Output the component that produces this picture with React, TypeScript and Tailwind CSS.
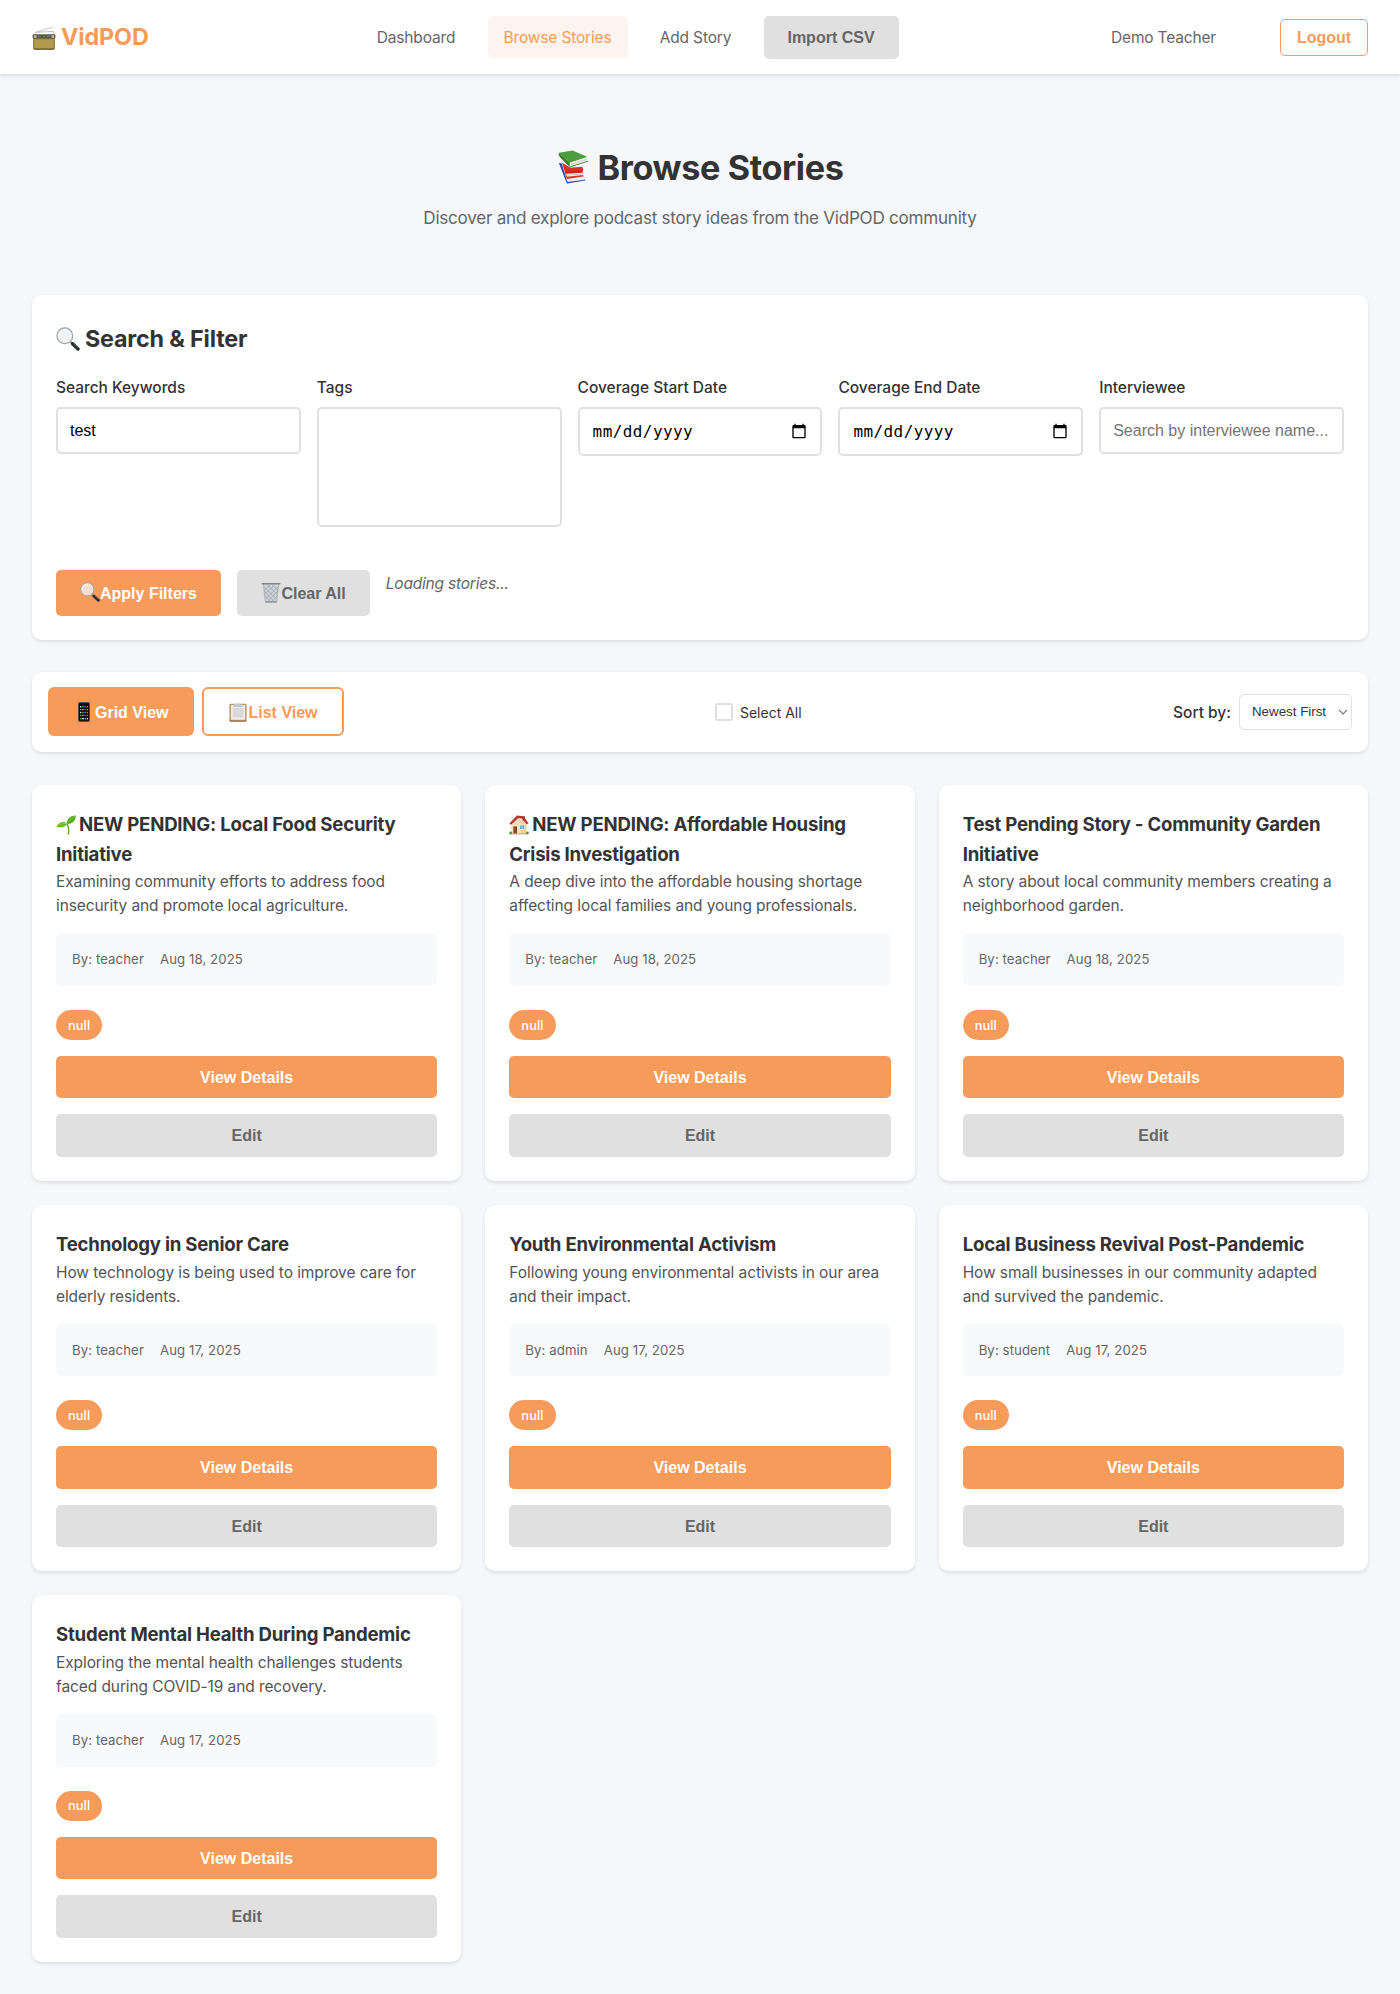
import type { ReactNode } from "react";

type IconProps = { className?: string };

function RadioIcon({ className }: IconProps) {
  return (
    <svg viewBox="0 0 24 24" className={className} fill="none">
      <path d="M3 6.4 21 1.2" stroke="#b9b6ae" strokeWidth="0.7" />
      <path d="M2.4 9 5 6.2l16.5-.7L22.4 9" stroke="#b3ad94" strokeWidth="0.8" />
      <rect x="0.6" y="8.2" width="22.8" height="4.6" rx="1" fill="#59595a" />
      <rect x="1.2" y="12" width="21.6" height="11.4" rx="1" fill="#7c6c33" />
      <rect x="2.2" y="13.2" width="19.6" height="9.2" fill="#b09b4e" />
      <rect x="5" y="9" width="14" height="2.8" fill="#4a5361" />
      <path d="M6 10.3h3M11 10.3h2M15 10.3h3" stroke="#8d97a5" strokeWidth="0.8" />
      <circle cx="3.2" cy="10.6" r="1.5" fill="#c6b577" />
      <circle cx="20.8" cy="10.6" r="1.5" fill="#c6b577" />
      <path d="M2.4 23.3h19.2" stroke="#4d4424" strokeWidth="0.8" />
    </svg>
  );
}

function BooksIcon({ className }: IconProps) {
  return (
    <svg viewBox="0 0 32 36" className={className}>
      <path d="m1 13.4 3 1 5.8 18.7 19-2.6.2 1.8L9.8 35.6 8.8 34z" fill="#2c4aa0" />
      <path d="m9.8 32 18.6-2.8.2 2.2-18.2 2.6z" fill="#e7e9ef" />
      <path d="m4.4 13.6 9 5.2 12.4-1 1.2 3.6-1 1 1 5.6L9.4 30.6z" fill="#dc2f22" />
      <path d="m8.6 25.2 18-1 .4 2.2-17.4 2z" fill="#f1ece8" />
      <path d="m8.2 23.6 17.6-1" stroke="#9c1d16" strokeWidth="0.8" />
      <path d="m9.2 26.6 17.6-1.4" stroke="#b9afab" strokeWidth="0.6" />
      <path d="M1 2.8 15.6.4l15.8 7-18.6 6.2z" fill="#4a9f3c" />
      <path d="M1 2.8 12.8 13.6 12.2 18 3 8.4C1 6.4.4 4.2 1 2.8z" fill="#37822e" />
      <path d="m12.8 13.6 18.6-6.2.2 4.4-17 5.6c-1.6.4-2.4-2.4-1.8-3.8z" fill="#ededee" />
      <path d="m12.6 18 19.2-6.2" stroke="#2f7a27" strokeWidth="0.9" />
      <path d="m13.6 15.4 17.6-5.6" stroke="#bcbcbe" strokeWidth="0.6" />
    </svg>
  );
}

function MagnifierIcon({ className, lens }: IconProps & { lens: string }) {
  return (
    <svg viewBox="0 0 24 24" className={className} fill="none">
      <path d="m14.6 14.8 2.4 2.4" stroke="#8b949b" strokeWidth="2.2" />
      <path d="m16.6 16.8 5.4 5.2" stroke="#25282b" strokeWidth="3.4" strokeLinecap="round" />
      <path d="m17.4 16.6 4.6 4.4" stroke="#6a6f73" strokeWidth="0.8" />
      <circle cx="8.8" cy="8.8" r="7.9" fill={lens} stroke="#9aa5ae" strokeWidth="1.2" />
      <path d="M3 8.8a5.8 5.8 0 0 1 5.8-5.8" stroke="#ffffff" strokeWidth="1.2" opacity="0.8" />
    </svg>
  );
}

function TrashIcon({ className }: IconProps) {
  return (
    <svg viewBox="0 0 20 22" className={className} fill="none">
      <path d="M2 2.4h16l-2 18.4H4z" fill="#ced3d9" />
      <path
        d="m2.4 5 13.6 13M2.8 9.6l9.8 10M3.6 14.6l5.4 6M6 3l11 10.6M11 3l6.8 6.4M17.6 5 4.2 18M17.2 9.6l-9.8 10M16.4 14.6l-5.4 6M14 3 3.2 13.6M9 3 2.6 9.4"
        stroke="#8d959e"
        strokeWidth="0.6"
      />
      <path d="m2 2.4 2 18.4h12l2-18.4" stroke="#a2a9b1" strokeWidth="0.8" />
      <path d="M.8 1.8h18.4" stroke="#7b838c" strokeWidth="1.4" strokeLinecap="round" />
      <path d="M4 20.9h12" stroke="#7f8790" strokeWidth="1.2" />
    </svg>
  );
}

function PhoneIcon({ className }: IconProps) {
  const rows = [4, 6.9, 9.8, 12.7];
  return (
    <svg viewBox="0 0 12 20" className={className}>
      <rect x="0.3" y="0.3" width="11.4" height="19.4" rx="1.6" fill="#17191b" stroke="#5b6064" strokeWidth="0.6" />
      <rect x="1.3" y="2" width="9.4" height="16" fill="#05070a" />
      {rows.map((y, i) => (
        <g key={y}>
          <rect x="2" y={y} width="1.4" height="1.4" fill={i % 2 ? "#3aa0e8" : "#d6dade"} />
          <rect x="4.2" y={y} width="1.4" height="1.4" fill={i % 2 ? "#e3b23c" : "#58b957"} />
          <rect x="6.4" y={y} width="1.4" height="1.4" fill={i % 2 ? "#d24a43" : "#4b88d9"} />
          <rect x="8.6" y={y} width="1.4" height="1.4" fill={i % 2 ? "#8f959b" : "#dd7438"} />
        </g>
      ))}
      <rect x="2" y="15.9" width="1.6" height="1.5" fill="#4cc25a" />
      <rect x="4.2" y="15.9" width="1.6" height="1.5" fill="#e9edf0" />
      <rect x="6.4" y="15.9" width="1.6" height="1.5" fill="#3b9be6" />
      <rect x="8.6" y="15.9" width="1.4" height="1.5" fill="#e9edf0" />
    </svg>
  );
}

function ClipboardIcon({ className }: IconProps) {
  return (
    <svg viewBox="0 0 18 20" className={className}>
      <rect x="0.4" y="1.8" width="17.2" height="17.8" rx="1" fill="#b8966b" />
      <path d="M.6 19.2h16.8" stroke="#7d5c38" strokeWidth="0.8" />
      <rect x="1.9" y="3" width="14.2" height="14.8" fill="#ededed" />
      <rect x="3.6" y="6" width="10.8" height="9.4" fill="#d9d9da" />
      <path d="M5 2.2h2.2a1.9 1.9 0 0 1 3.6 0H13l.8 2.4H4.2z" fill="#c6ccd2" />
      <path d="M4.4 4.4h9.2" stroke="#a9b0b7" strokeWidth="0.6" />
    </svg>
  );
}

function SeedlingIcon({ className }: IconProps) {
  return (
    <svg viewBox="0 0 20 20" className={className} fill="none">
      <path d="M12.4 19C13 15.5 12.6 11.5 11 8.6" stroke="#6fae24" strokeWidth="1.5" strokeLinecap="round" />
      <path d="M10.6 9.4C10.8 4.6 13.4.8 19.8.6c0 5-3.4 8.6-9.2 8.8z" fill="#56a81c" />
      <path d="M11 9C13 5.6 15.6 3 19 1.2" stroke="#86cc3c" strokeWidth="0.9" />
      <path d="M11.2 8.8C8.6 6 3.4 6.2.4 11.8c4.2 1.2 9 .4 10.8-3z" fill="#62b422" />
      <path d="M1.4 11.2c3-2.2 6-3 9.4-2.6" stroke="#9ad650" strokeWidth="0.9" />
    </svg>
  );
}

function HouseIcon({ className }: IconProps) {
  return (
    <svg viewBox="0 0 20 20" className={className}>
      <rect x="13.6" y="1.2" width="2.4" height="5" fill="#9c5a41" />
      <path d="M2.6 8.6 8.6 2.6 17.6 9v9.8H2.6z" fill="#ecd2a0" />
      <path d="M2.6 8.8 8.6 3 12 8.8v10H2.6z" fill="#f3dfb6" />
      <path d="M.4 8.6 8 .6l6.6.6 5 7.2-2 .8-4.6-5.4L9.4 3 2 9.8z" fill="#b5352c" />
      <rect x="4.4" y="11.4" width="3.6" height="7.2" fill="#834a2c" />
      <rect x="10.8" y="10" width="5" height="4.4" fill="#5ea3d6" stroke="#fdf6e4" strokeWidth="0.7" />
      <path d="M13.3 10v4.4" stroke="#fdf6e4" strokeWidth="0.5" />
      <path d="M2 18.9h16" stroke="#b59a73" strokeWidth="0.9" />
      <circle cx="1.6" cy="18" r="1.4" fill="#4f9a35" />
      <circle cx="18.4" cy="18" r="1.4" fill="#4f9a35" />
    </svg>
  );
}

function CalendarIcon({ className }: IconProps) {
  return (
    <svg viewBox="0 0 24 24" className={className} fill="#000">
      <path d="M20 3h-1V1h-2v2H7V1H5v2H4c-1.1 0-2 .9-2 2v16c0 1.1.9 2 2 2h16c1.1 0 2-.9 2-2V5c0-1.1-.9-2-2-2zm0 18H4V8h16v13z" />
    </svg>
  );
}

function Field({ label, children }: { label: string; children: ReactNode }) {
  return (
    <div className="flex min-w-0 flex-col">
      <label className="mb-[7px] pt-px text-[15.5px] leading-[25.6px] font-medium tracking-[-0.02px] text-[#333]">
        {label}
      </label>
      {children}
    </div>
  );
}

function DateField({ label }: { label: string }) {
  return (
    <Field label={label}>
      <div className="flex h-[48.6px] items-center justify-between rounded-[5px] border-2 border-[#e0e0e0] bg-white pr-[13px] pl-[13px] text-black">
        <span className="pt-px font-['DejaVu_Sans_Mono',monospace] text-[16px] tracking-[0.42px]">mm/dd/yyyy</span>
        <CalendarIcon className="size-4" />
      </div>
    </Field>
  );
}

type Story = {
  icon?: "seedling" | "house";
  title: [string, string?];
  text: [string, string];
  author: string;
  date: string;
};

const stories: Story[] = [
  {
    icon: "seedling",
    title: ["NEW PENDING: Local Food Security", "Initiative"],
    text: ["Examining community efforts to address food", "insecurity and promote local agriculture."],
    author: "teacher",
    date: "Aug 18, 2025",
  },
  {
    icon: "house",
    title: ["NEW PENDING: Affordable Housing", "Crisis Investigation"],
    text: ["A deep dive into the affordable housing shortage", "affecting local families and young professionals."],
    author: "teacher",
    date: "Aug 18, 2025",
  },
  {
    title: ["Test Pending Story - Community Garden", "Initiative"],
    text: ["A story about local community members creating a", "neighborhood garden."],
    author: "teacher",
    date: "Aug 18, 2025",
  },
  {
    title: ["Technology in Senior Care"],
    text: ["How technology is being used to improve care for", "elderly residents."],
    author: "teacher",
    date: "Aug 17, 2025",
  },
  {
    title: ["Youth Environmental Activism"],
    text: ["Following young environmental activists in our area", "and their impact."],
    author: "admin",
    date: "Aug 17, 2025",
  },
  {
    title: ["Local Business Revival Post-Pandemic"],
    text: ["How small businesses in our community adapted", "and survived the pandemic."],
    author: "student",
    date: "Aug 17, 2025",
  },
  {
    title: ["Student Mental Health During Pandemic"],
    text: ["Exploring the mental health challenges students", "faced during COVID-19 and recovery."],
    author: "teacher",
    date: "Aug 17, 2025",
  },
];

function StoryCard({ story }: { story: Story }) {
  const [first, second] = story.title;
  return (
    <article className="flex flex-col rounded-[10px] bg-white p-6 shadow-[0_2px_4px_rgba(0,0,0,0.1)]">
      <h3 className="pt-[1.4px] text-[18.6px] leading-[29.6px] font-bold tracking-[-0.22px] whitespace-nowrap text-[#333]">
        <span className="flex items-center">
          {story.icon === "seedling" && <SeedlingIcon className="mr-[3px] size-5" />}
          {story.icon === "house" && <HouseIcon className="mr-[3px] size-5" />}
          {first}
        </span>
        {second && <span className="block">{second}</span>}
      </h3>
      <p className="mt-[0.9px] text-[15.5px] leading-6 tracking-[-0.09px] whitespace-nowrap text-[#555]">
        {story.text[0]}
        <br />
        {story.text[1]}
      </p>
      <div className="mt-[15px] flex h-[52.6px] items-center gap-4 rounded-[6px] bg-[#f8f9fb] px-4 pt-[1.5px] text-[13.2px] tracking-[0.09px] text-[#666]">
        <span>By: {story.author}</span>
        <span>{story.date}</span>
      </div>
      <div className="mt-6 flex">
        <span className="flex h-[30px] items-center rounded-full bg-[#f79b5b] px-3 pt-px text-[12.8px] font-medium tracking-[0.1px] text-white">
          null
        </span>
      </div>
      <button className="mt-4 h-[42.5px] rounded-[5px] bg-[#f79b5b] pt-[2px] font-['Liberation_Sans',sans-serif] text-[16px] font-bold text-white">
        View Details
      </button>
      <button className="mt-4 h-[42.5px] rounded-[5px] bg-[#e0e0e0] pt-[2px] font-['Liberation_Sans',sans-serif] text-[16px] font-bold text-[#666]">
        Edit
      </button>
    </article>
  );
}

export default function App() {
  return (
    <div className="min-h-[1994px] bg-[#f5f7fb] font-['Inter',sans-serif] text-[#333]">
      <header className="flex h-[74.4px] items-center bg-white px-8 shadow-[0_2px_4px_rgba(0,0,0,0.1)]">
        <div className="flex w-[328.5px] items-center pt-px text-[23.3px] font-bold tracking-[-0.1px] text-[#f79b5b]">
          <RadioIcon className="mr-[5px] size-6" />
          VidPOD
        </div>
        <nav className="flex items-center gap-4 text-[15.5px] tracking-[-0.17px] text-[#666]">
          <a className="flex h-[42px] w-[111px] items-center justify-center">Dashboard</a>
          <a className="flex h-[42px] w-[140px] items-center justify-center rounded-[5px] bg-[#fef4ef] text-[#f79b5b]">
            Browse Stories
          </a>
          <a className="flex h-[42px] w-[104px] items-center justify-center">Add Story</a>
          <button className="h-[43px] w-[135px] rounded-[5px] bg-[#e0e0e0] pt-[2px] font-['Liberation_Sans',sans-serif] text-[16px] font-bold tracking-normal">
            Import CSV
          </button>
        </nav>
        <div className="ml-auto flex items-center gap-16">
          <span className="text-[15.5px] tracking-[-0.17px] text-[#666]">Demo Teacher</span>
          <button className="h-[37px] w-[88px] rounded-[5px] border border-[#f79b5b] pt-px font-['Liberation_Sans',sans-serif] text-[16px] font-bold text-[#f79b5b]">
            Logout
          </button>
        </div>
      </header>

      <main className="px-8">
        <section className="flex h-[220.8px] flex-col items-center pt-[65px]">
          <h1 className="flex h-[56px] items-center text-[34.2px] font-bold tracking-[-0.4px]">
            <BooksIcon className="mr-[9px] h-[34px] w-[32px]" />
            Browse Stories
          </h1>
          <p className="mt-[9px] text-[17.1px] leading-7 tracking-[-0.25px] text-[#666]">
            Discover and explore podcast story ideas from the VidPOD community
          </p>
        </section>

        <section className="h-[344.4px] rounded-[10px] bg-white p-6 shadow-[0_2px_4px_rgba(0,0,0,0.1)]">
          <h2 className="mb-4 flex h-[38.4px] items-center pt-[1.5px] text-[23.3px] font-bold tracking-[-0.18px]">
            <MagnifierIcon className="mr-[5px] size-6" lens="#f1f4f6" />
            Search &amp; Filter
          </h2>
          <div className="grid grid-cols-5 items-start gap-4">
            <Field label="Search Keywords">
              <input
                defaultValue="test"
                className="h-[46.4px] w-full rounded-[5px] border-2 border-[#e0e0e0] px-3 pt-px font-['Liberation_Sans',sans-serif] text-[16px] text-black"
              />
            </Field>
            <Field label="Tags">
              <div className="h-[120px] rounded-[5px] border-2 border-[#e0e0e0]" />
            </Field>
            <DateField label="Coverage Start Date" />
            <DateField label="Coverage End Date" />
            <Field label="Interviewee">
              <input
                placeholder="Search by interviewee name..."
                className="h-[46.4px] w-full rounded-[5px] border-2 border-[#e0e0e0] px-3 pt-px font-['Liberation_Sans',sans-serif] text-[16px] placeholder:text-[#757575]"
              />
            </Field>
          </div>
          <div className="mt-[43.2px] flex gap-4">
            <button className="flex h-[45.4px] items-center rounded-[5px] bg-[#f79b5b] px-6 pt-[2px] font-['Liberation_Sans',sans-serif] text-[16px] font-bold text-white">
              <MagnifierIcon className="-mt-1 size-5" lens="#f6ddcf" />
              Apply Filters
            </button>
            <button className="flex h-[45.4px] items-center rounded-[5px] bg-[#e0e0e0] px-6 pt-[2px] font-['Liberation_Sans',sans-serif] text-[16px] font-bold text-[#666]">
              <TrashIcon className="-mt-1 mr-[0.5px] h-[21px] w-5" />
              Clear All
            </button>
            <span className="pt-px text-[15.5px] leading-[25.6px] tracking-[-0.2px] text-[#666] italic">Loading stories...</span>
          </div>
        </section>

        <section className="mt-8 flex h-[80.7px] items-center justify-between rounded-[10px] bg-white px-4 shadow-[0_2px_4px_rgba(0,0,0,0.1)]">
          <div className="flex gap-2">
            <button className="flex h-[49px] w-[146px] items-center rounded-[6px] bg-[#f79b5b] pt-[2px] pl-[30px] font-['Liberation_Sans',sans-serif] text-[16px] font-bold text-white">
              <PhoneIcon className="-mt-0.5 mr-[5px] h-5 w-3" />
              Grid View
            </button>
            <button className="flex h-[49px] w-[141.5px] items-center rounded-[6px] border-2 border-[#f79b5b] bg-white pt-[2px] pl-[25px] font-['Liberation_Sans',sans-serif] text-[16px] font-bold text-[#f79b5b]">
              <ClipboardIcon className="-mt-0.5 mr-[1.5px] h-5 w-[18px]" />
              List View
            </button>
          </div>
          <div className="flex items-center gap-[7px]">
            <span className="size-[18px] rounded-[3px] border-2 border-[#e0e0e0] bg-white" />
            <span className="pt-[2px] text-[14px]">Select All</span>
          </div>
          <div className="flex items-center gap-2">
            <span className="pt-px text-[15.5px] font-medium">Sort by:</span>
            <div className="flex h-[35.5px] w-[113px] items-center justify-between rounded-[5px] border border-[#e0e0e0] pt-px pr-[3px] pl-3 font-['Liberation_Sans',sans-serif] text-[13.33px]">
              Newest First
              <svg viewBox="0 0 10 6" className="h-1.5 w-2.5" fill="none">
                <path d="m1 1 4 4 4-4" stroke="#777" strokeWidth="1.1" />
              </svg>
            </div>
          </div>
        </section>

        <section className="mt-[32.3px] grid grid-cols-3 gap-6">
          {stories.map((story) => (
            <StoryCard key={story.title[0]} story={story} />
          ))}
        </section>
      </main>
    </div>
  );
}
